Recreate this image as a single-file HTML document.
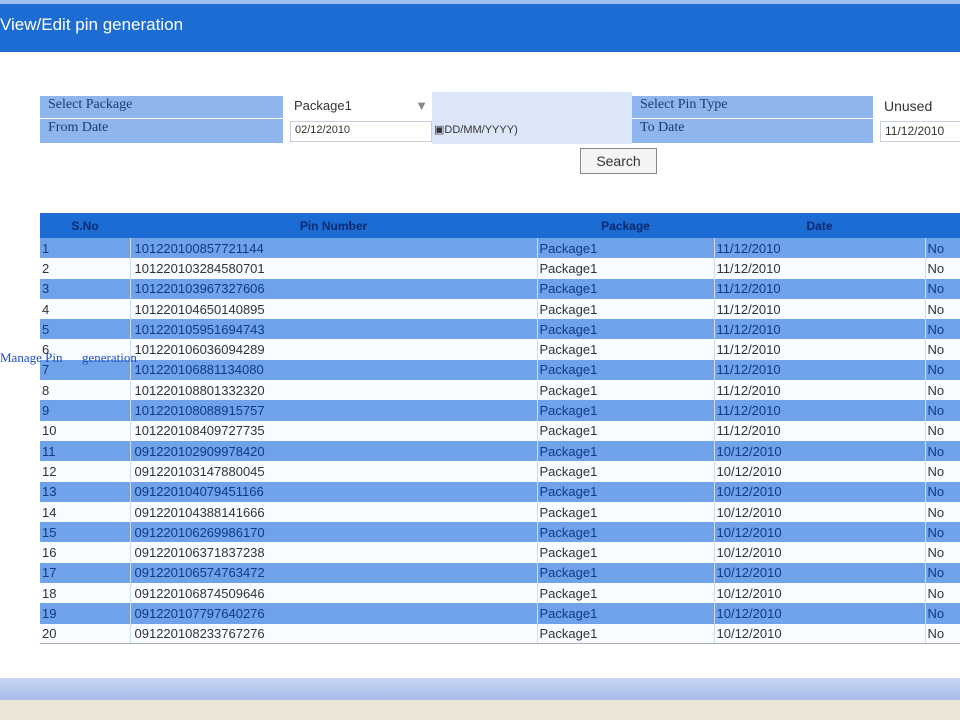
<!DOCTYPE html>
<html><head><meta charset="utf-8"><style>
*{margin:0;padding:0;box-sizing:border-box}
body{width:960px;height:720px;overflow:hidden;background:#fff;font-family:"Liberation Sans",sans-serif;position:relative}
.top{position:absolute;left:0;top:0;width:960px;height:4px;background:#9cc0ee}
.title{position:absolute;left:0;top:4px;width:960px;height:48px;background:#1c6cd4;color:#fff;font-size:17px;padding:11px 0 0 0}
.lbl{position:absolute;background:#8fb6ec;color:#1a3a7a;font-family:"Liberation Serif",serif;font-size:14px;padding:1px 0 0 8px}
.inp{position:absolute;background:#fff;border:1px solid #c8cfdc;font-size:13px;color:#333;padding:2px 4px}
.mid{position:absolute;left:432px;top:92px;width:200px;height:52px;background:#dbe6f8}
.btn{position:absolute;left:580px;top:148px;width:77px;height:26px;border:1px solid #888;background:#f4f4f4;font-size:14px;text-align:center;line-height:24px;color:#333}
table{position:absolute;left:40px;top:213px;width:940px;border-collapse:collapse;font-size:13px}
th{background:#1c6cd4;color:#0a2a70;height:25px;font-size:12px;font-weight:bold}
td{height:20.3px;padding:0 0 0 2px;white-space:nowrap;border-right:1px solid #d0dcef}
td:nth-child(2){padding-left:4px}
tr.o td{background:#6fa2e8;color:#0d3a8a}
tr.e td{background:#f8fbff;color:#333}
tr.l td{border-bottom:1px solid #aab}
.link{position:absolute;left:0;top:350px;color:#1a4ec8;font-family:"Liberation Serif",serif;font-size:13px}
.bot{position:absolute;left:0;top:678px;width:960px;height:22px;background:linear-gradient(#c8d6f4,#a9bdea)}
.bot2{position:absolute;left:0;top:700px;width:960px;height:20px;background:#ece6d8}
</style></head><body>
<div class="top"></div>
<div class="title">View/Edit pin generation</div>
<div class="mid"></div>
<div class="lbl" style="left:40px;top:96px;width:243px;height:22px">Select Package</div>
<div class="lbl" style="left:40px;top:119px;width:243px;height:24px">From Date</div>
<div class="inp" style="left:290px;top:96px;width:142px;height:21px;border:none">Package1 <span style="float:right;color:#888">▼</span></div>
<div class="inp" style="left:290px;top:121px;width:142px;height:21px;font-size:11px">02/12/2010</div>
<div style="position:absolute;left:434px;top:123px;font-size:11px;color:#333">▣DD/MM/YYYY)</div>
<div class="lbl" style="left:632px;top:96px;width:241px;height:22px">Select Pin Type</div>
<div class="lbl" style="left:632px;top:119px;width:241px;height:24px">To Date</div>
<div class="inp" style="left:880px;top:96px;width:90px;height:21px;border:none;font-size:14px">Unused</div>
<div class="inp" style="left:880px;top:121px;width:90px;height:21px;font-size:12px">11/12/2010</div>
<div class="btn">Search</div>
<table>
<tr><th style="width:90px">S.No</th><th style="width:407px">Pin Number</th><th style="width:177px">Package</th><th style="width:211px">Date</th><th></th></tr>
<tr class="o"><td>1</td><td>101220100857721144</td><td>Package1</td><td>11/12/2010</td><td>No</td></tr>
<tr class="e"><td>2</td><td>101220103284580701</td><td>Package1</td><td>11/12/2010</td><td>No</td></tr>
<tr class="o"><td>3</td><td>101220103967327606</td><td>Package1</td><td>11/12/2010</td><td>No</td></tr>
<tr class="e"><td>4</td><td>101220104650140895</td><td>Package1</td><td>11/12/2010</td><td>No</td></tr>
<tr class="o"><td>5</td><td>101220105951694743</td><td>Package1</td><td>11/12/2010</td><td>No</td></tr>
<tr class="e"><td>6</td><td>101220106036094289</td><td>Package1</td><td>11/12/2010</td><td>No</td></tr>
<tr class="o"><td>7</td><td>101220106881134080</td><td>Package1</td><td>11/12/2010</td><td>No</td></tr>
<tr class="e"><td>8</td><td>101220108801332320</td><td>Package1</td><td>11/12/2010</td><td>No</td></tr>
<tr class="o"><td>9</td><td>101220108088915757</td><td>Package1</td><td>11/12/2010</td><td>No</td></tr>
<tr class="e"><td>10</td><td>101220108409727735</td><td>Package1</td><td>11/12/2010</td><td>No</td></tr>
<tr class="o"><td>11</td><td>091220102909978420</td><td>Package1</td><td>10/12/2010</td><td>No</td></tr>
<tr class="e"><td>12</td><td>091220103147880045</td><td>Package1</td><td>10/12/2010</td><td>No</td></tr>
<tr class="o"><td>13</td><td>091220104079451166</td><td>Package1</td><td>10/12/2010</td><td>No</td></tr>
<tr class="e"><td>14</td><td>091220104388141666</td><td>Package1</td><td>10/12/2010</td><td>No</td></tr>
<tr class="o"><td>15</td><td>091220106269986170</td><td>Package1</td><td>10/12/2010</td><td>No</td></tr>
<tr class="e"><td>16</td><td>091220106371837238</td><td>Package1</td><td>10/12/2010</td><td>No</td></tr>
<tr class="o"><td>17</td><td>091220106574763472</td><td>Package1</td><td>10/12/2010</td><td>No</td></tr>
<tr class="e"><td>18</td><td>091220106874509646</td><td>Package1</td><td>10/12/2010</td><td>No</td></tr>
<tr class="o"><td>19</td><td>091220107797640276</td><td>Package1</td><td>10/12/2010</td><td>No</td></tr>
<tr class="e l"><td>20</td><td>091220108233767276</td><td>Package1</td><td>10/12/2010</td><td>No</td></tr>
</table>
<div class="link">Manage Pin &nbsp;&nbsp;&nbsp;&nbsp; generation</div>
<div class="bot"></div>
<div class="bot2"></div>
</body></html>
